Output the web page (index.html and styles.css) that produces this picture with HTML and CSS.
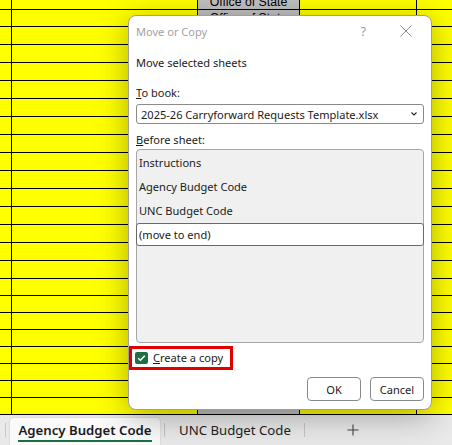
FILE: index.html
```html
<!DOCTYPE html>
<html>
<head>
<meta charset="utf-8">
<link rel="stylesheet" href="styles.css">
</head>
<body>
<div class="app">
  <div class="sheet">
    <div class="row r9"><div class="c"></div><div class="c"></div><div class="c g first"><span class="cell-text">Office of State</span></div><div class="c"></div><div class="c"></div></div>
    <div class="row r16"><div class="c"></div><div class="c"></div><div class="c g"><span class="cell-text">Office of State</span></div><div class="c"></div><div class="c"></div></div>
    <div class="row r17"><div class="c"></div><div class="c"></div><div class="c g"></div><div class="c"></div><div class="c"></div></div>
    <div class="row r17"><div class="c"></div><div class="c"></div><div class="c g"></div><div class="c"></div><div class="c"></div></div>
    <div class="row r17"><div class="c"></div><div class="c"></div><div class="c g"></div><div class="c"></div><div class="c"></div></div>
    <div class="row r17"><div class="c"></div><div class="c"></div><div class="c g"></div><div class="c"></div><div class="c"></div></div>
    <div class="row r17"><div class="c"></div><div class="c"></div><div class="c g"></div><div class="c"></div><div class="c"></div></div>
    <div class="row r17"><div class="c"></div><div class="c"></div><div class="c g"></div><div class="c"></div><div class="c"></div></div>
    <div class="row r17"><div class="c"></div><div class="c"></div><div class="c g"></div><div class="c"></div><div class="c"></div></div>
    <div class="row r17"><div class="c"></div><div class="c"></div><div class="c g"></div><div class="c"></div><div class="c"></div></div>
    <div class="row r17"><div class="c"></div><div class="c"></div><div class="c g"></div><div class="c"></div><div class="c"></div></div>
    <div class="row r17"><div class="c"></div><div class="c"></div><div class="c g"></div><div class="c"></div><div class="c"></div></div>
    <div class="row r17"><div class="c"></div><div class="c"></div><div class="c g"></div><div class="c"></div><div class="c"></div></div>
    <div class="row r17"><div class="c"></div><div class="c"></div><div class="c g"></div><div class="c"></div><div class="c"></div></div>
    <div class="row r17"><div class="c"></div><div class="c"></div><div class="c g"></div><div class="c"></div><div class="c"></div></div>
    <div class="row r17"><div class="c"></div><div class="c"></div><div class="c g"></div><div class="c"></div><div class="c"></div></div>
    <div class="row r16"><div class="c"></div><div class="c"></div><div class="c g"></div><div class="c"></div><div class="c"></div></div>
    <div class="row r16"><div class="c"></div><div class="c"></div><div class="c g"></div><div class="c"></div><div class="c"></div></div>
    <div class="row r16"><div class="c"></div><div class="c"></div><div class="c g"></div><div class="c"></div><div class="c"></div></div>
    <div class="row r16"><div class="c"></div><div class="c"></div><div class="c g"></div><div class="c"></div><div class="c"></div></div>
    <div class="row r16"><div class="c"></div><div class="c"></div><div class="c g"></div><div class="c"></div><div class="c"></div></div>
    <div class="row r16"><div class="c"></div><div class="c"></div><div class="c g"></div><div class="c"></div><div class="c"></div></div>
    <div class="row r16"><div class="c"></div><div class="c"></div><div class="c g"></div><div class="c"></div><div class="c"></div></div>
    <div class="row r16"><div class="c"></div><div class="c"></div><div class="c g"></div><div class="c"></div><div class="c"></div></div>
  </div>

  <div class="tabs">
    <span class="sep"></span>
    <div class="tab active"><span class="tab-label">Agency Budget Code</span></div>
    <span class="sep"></span>
    <div class="tab"><span class="tab-label">UNC Budget Code</span></div>
    <span class="sep"></span>
    <div class="add-tab">
      <svg width="12" height="12" viewBox="0 0 12 12"><path d="M6 0.5V11.5M0.5 6H11.5" stroke="#444" stroke-width="1.1" fill="none"/></svg>
    </div>
  </div>

  <div class="dialog">
    <div class="titlebar">
      <span class="title">Move or Copy</span>
      <span class="help">?</span>
      <svg class="close" width="12" height="12" viewBox="0 0 12 12"><path d="M0.5 0.5L11.5 11.5M11.5 0.5L0.5 11.5" stroke="#8c8c8c" stroke-width="1" fill="none"/></svg>
    </div>
    <div class="msg">Move selected sheets</div>
    <div class="label"><u>T</u>o book:</div>
    <div class="select">
      <span>2025-26 Carryforward Requests Template.xlsx</span>
      <svg width="6" height="4" viewBox="0 0 6 4"><path d="M0.5 0.5L3 3L5.5 0.5" stroke="#222" stroke-width="1.1" fill="none"/></svg>
    </div>
    <div class="label before"><u>B</u>efore sheet:</div>
    <div class="list">
      <div class="item">Instructions</div>
      <div class="item">Agency Budget Code</div>
      <div class="item">UNC Budget Code</div>
      <div class="item selected">(move to end)</div>
    </div>
    <div class="check-row">
      <svg class="checkbox" width="13" height="12" viewBox="0 0 13 12"><rect x="0" y="0" width="13" height="12" rx="2" fill="#1d7044"/><path d="M3.2 6.2L5.4 8.3L9.8 3.8" stroke="#fff" stroke-width="1.5" fill="none"/></svg>
      <span class="check-label"><u>C</u>reate a copy</span>
    </div>
    <div class="buttons">
      <div class="btn">OK</div>
      <div class="btn">Cancel</div>
    </div>
  </div>
</div>
</body>
</html>
```

FILE: styles.css
```css
html, body {
  margin: 0;
  padding: 0;
}
body {
  width: 452px;
  height: 445px;
  overflow: hidden;
  font-family: "Noto Sans", "Open Sans", sans-serif;
}
.app {
  position: relative;
  width: 452px;
  height: 445px;
  overflow: hidden;
}
.sheet {
  display: flex;
  flex-direction: column;
  gap: 1px;
  padding-bottom: 1px;
  background: #000;
}
.row {
  display: grid;
  grid-template-columns: 11px 185px 101px 116px 1fr;
  column-gap: 1px;
}
.r9 { height: 9px; }
.r16 { height: 16px; }
.r17 { height: 17px; }
.c {
  background: #ffff00;
  overflow: hidden;
  display: flex;
  align-items: center;
  justify-content: center;
}
.c.g { background: #c0c0c0; }
.c.first { align-items: flex-end; }
.cell-text {
  font-family: "Liberation Sans", Arial, sans-serif;
  font-size: 12.3px;
  line-height: 14px;
  color: #000;
  white-space: nowrap;
}

.tabs {
  height: 30px;
  background: #e9e9e9;
  display: flex;
  align-items: center;
  padding-left: 5px;
}
.sep {
  width: 1px;
  height: 14px;
  background: #c6c6c6;
}
.tab {
  height: 30px;
  display: flex;
  align-items: center;
  font-size: 13.2px;
  color: #222;
  white-space: nowrap;
}
.tab.active {
  width: 150px;
  margin: 0 4px;
  height: 27px;
  align-self: flex-end;
  background: #fafafa;
  border-radius: 4px 4px 0 0;
  box-shadow: 0 0 2px rgba(0,0,0,0.18);
  font-weight: 600;
  color: #1a1a1a;
  justify-content: center;
  align-items: flex-start;
}
.tab.active .tab-label {
  margin-top: 3px;
  line-height: 18px;
  border-bottom: 2px solid #1b7043;
  padding-bottom: 1px;
}
.tab:not(.active) {
  padding: 0 13px 0 14px;
}
.add-tab {
  width: 96px;
  display: flex;
  justify-content: center;
  align-items: center;
  height: 30px;
}

.dialog {
  position: absolute;
  left: 128px;
  top: 15px;
  width: 304px;
  height: 395px;
  box-sizing: border-box;
  border: 1px solid #9e9e9e;
  border-radius: 8px;
  background: #fff;
  box-shadow: 0 6px 32px rgba(0,0,0,0.32);
  padding: 0 7px;
  font-size: 11.05px;
  color: #1a1a1a;
  display: flex;
  flex-direction: column;
}
.titlebar {
  height: 30px;
  display: flex;
  align-items: center;
}
.title {
  color: #a2a2a2;
  flex: 1;
}
.help {
  color: #999;
  font-size: 12px;
  margin-right: 34px;
}
.close {
  margin-right: 12px;
}
.msg {
  margin-top: 9px;
  line-height: 16px;
}
.label {
  margin-top: 14px;
  line-height: 16px;
}
.label.before {
  margin-top: 8px;
}
.select {
  margin-top: 3px;
  height: 20px;
  box-sizing: border-box;
  border: 1px solid #8a8a8a;
  border-radius: 3px;
  display: flex;
  align-items: center;
  justify-content: space-between;
  padding: 0 6px 0 4px;
  white-space: nowrap;
}
.list {
  margin-top: 1px;
  height: 194px;
  box-sizing: border-box;
  border: 1px solid #a6a6a6;
  border-radius: 4px;
  background: #f0f0f0;
  padding-top: 1px;
}
.item {
  height: 24px;
  line-height: 24px;
  padding-left: 2px;
}
.item.selected {
  background: #fff;
  border: 1px solid #6a6a6a;
  border-radius: 3px;
  box-sizing: border-box;
  height: 23px;
  line-height: 21px;
  margin: 0 -1px;
  padding-left: 2px;
}
.check-row {
  margin-top: 3px;
  margin-left: -7px;
  width: 104px;
  height: 24px;
  box-sizing: border-box;
  border: 3px solid #e00000;
  display: flex;
  align-items: center;
  padding-left: 3px;
}
.checkbox {
  margin-right: 5px;
}
.check-label {
  line-height: 16px;
  white-space: nowrap;
}
.buttons {
  margin-top: 7px;
  display: flex;
  justify-content: flex-end;
  gap: 9px;
}
.btn {
  width: 54px;
  height: 24px;
  box-sizing: border-box;
  border: 1px solid #8a8a8a;
  border-radius: 4px;
  display: flex;
  align-items: center;
  justify-content: center;
  background: #fff;
}
```
